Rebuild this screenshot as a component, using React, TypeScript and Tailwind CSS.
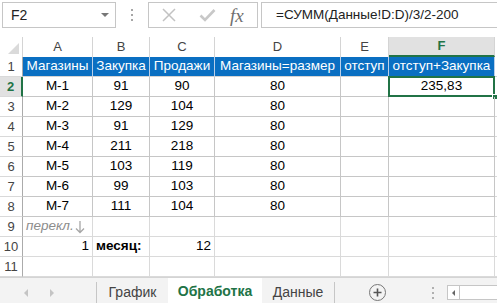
import React from "react";

const cols = ["w-[70px]", "w-[57px]", "w-[65px]", "w-[126px]", "w-[48px]", "w-[106px]"];

type Cell = { t?: React.ReactNode; align?: "l" | "c" | "r"; cls?: string };

const DownArrow = () => (
    <svg width="10" height="14" viewBox="0 0 10 14" className="ml-[1px]">
        <path d="M5 1 V12.5 M1 8.5 L5 12.5 L9 8.5" stroke="#a6a6a6" strokeWidth="1.3" fill="none" />
    </svg>
);

const dataRows: Cell[][] = [
    [{ t: "М-1" }, { t: "91" }, { t: "90" }, { t: "80" }, {}, { t: "235,83" }],
    [{ t: "М-2" }, { t: "129" }, { t: "104" }, { t: "80" }, {}, {}],
    [{ t: "М-3" }, { t: "91" }, { t: "129" }, { t: "80" }, {}, {}],
    [{ t: "М-4" }, { t: "211" }, { t: "218" }, { t: "80" }, {}, {}],
    [{ t: "М-5" }, { t: "103" }, { t: "119" }, { t: "80" }, {}, {}],
    [{ t: "М-6" }, { t: "99" }, { t: "103" }, { t: "80" }, {}, {}],
    [{ t: "М-7" }, { t: "111" }, { t: "104" }, { t: "80" }, {}, {}],
    [{ t: <>перекл.<DownArrow /></>, align: "l", cls: "italic text-[#8c8c8c]" }, {}, {}, {}, {}, {}],
    [{ t: "1", align: "r" }, { t: "месяц:", align: "l", cls: "font-bold" }, { t: "12", align: "r" }, {}, {}, {}],
    [{}, {}, {}, {}, {}, {}],
];

const headers = ["Магазины", "Закупка", "Продажи", "Магазины=размер", "отступ", "отступ+Закупка"];

const RowHead = ({ n, active }: { n: number; active?: boolean }) => (
    <div className={`w-[23px] h-full shrink-0 flex items-center justify-center border-b border-[#d9d9d9] text-[13px] ${active ? "bg-[#e1e1e1] text-[#217346] font-bold border-r-2 border-r-[#217346]" : "bg-white text-[#444] border-r border-r-[#ababab]"}`}>
        {n}
    </div>
);

const App = () => {
    return (
        <div className="w-[497px] h-[303px] bg-white overflow-hidden flex flex-col text-[#000]" style={{ fontFamily: '"Liberation Sans", Arial, sans-serif' }}>
            {/* formula bar */}
            <div className="h-[37px] shrink-0 flex items-start pt-[2px] pl-[2px]">
                <div className="w-[114px] h-[26px] border border-[#c6c6c6] flex items-center justify-between pl-[8px] pr-[6px] text-[14px] text-[#222]">
                    <span>F2</span>
                    <span className="w-0 h-0 border-l-[4px] border-r-[4px] border-t-[4px] border-l-transparent border-r-transparent border-t-[#777]"></span>
                </div>
                <div className="w-[32px] h-[26px] flex flex-col items-center justify-center gap-[3px]">
                    <span className="w-[2px] h-[2px] bg-[#a6a6a6]"></span>
                    <span className="w-[2px] h-[2px] bg-[#a6a6a6]"></span>
                    <span className="w-[2px] h-[2px] bg-[#a6a6a6]"></span>
                </div>
                <div className="w-[110px] h-[26px] border border-[#c6c6c6] flex items-center pl-[12px]">
                    <svg width="16" height="16" viewBox="0 0 16 16" className="mr-[22px]">
                        <path d="M2 2 L14 14 M14 2 L2 14" stroke="#c2c2c2" strokeWidth="1.5" fill="none" />
                    </svg>
                    <svg width="17" height="14" viewBox="0 0 17 14" className="mr-[14px]">
                        <path d="M1.5 7.5 L6 12 L15.5 2" stroke="#c8c8c8" strokeWidth="2.6" fill="none" />
                    </svg>
                    <span className="italic text-[19px] text-[#6f6f6f] leading-none" style={{ fontFamily: '"Liberation Serif", "Times New Roman", serif' }}>fx</span>
                </div>
                <div className="ml-[3px] flex-1 h-[26px] border border-r-0 border-[#c6c6c6] flex items-center pl-[14px] text-[13.5px] text-[#222]">
                    =СУММ(Данные!D:D)/3/2-200
                </div>
            </div>

            {/* column headers */}
            <div className="h-[20px] shrink-0 flex text-[13px] text-[#444]">
                <div className="w-[23px] shrink-0 border-r border-[#d4d4d4] relative">
                    <span className="absolute right-[3px] bottom-[3px] w-0 h-0 border-b-[11px] border-l-[11px] border-b-[#dadada] border-l-transparent"></span>
                </div>
                {["A", "B", "C", "D", "E"].map((c, i) => (
                    <div key={c} className={`${cols[i]} shrink-0 flex items-center justify-center border-r border-[#d4d4d4]`}>{c}</div>
                ))}
                <div className={`${cols[5]} shrink-0 flex items-center justify-center bg-[#e1e1e1] text-[#217346] font-bold border-b-2 border-[#217346] border-r border-r-[#d4d4d4]`}>F</div>
                <div className="flex-1"></div>
            </div>

            {/* row 1 */}
            <div className="h-[20px] shrink-0 flex">
                <RowHead n={1} />
                {headers.map((h, i) => (
                    <div key={h} className={`${cols[i]} shrink-0 bg-[#0a6fc2] text-white text-[13.5px] flex items-center justify-center whitespace-nowrap overflow-hidden border-r border-[#b9cfe9] border-b border-b-[#d4d4d4]`}>{h}</div>
                ))}
                <div className="flex-1 border-b border-[#d4d4d4]"></div>
            </div>

            {/* data rows */}
            {dataRows.map((row, r) => (
                <div key={r} className="h-[20px] shrink-0 flex">
                    <RowHead n={r + 2} active={r === 0} />
                    {row.map((c, i) => (
                        <div
                            key={i}
                            className={`${cols[i]} shrink-0 relative flex items-center text-[13.5px] px-[3px] whitespace-nowrap border-r border-b ${r < 7 ? "border-[#c6c6c6]" : "border-[#dadada]"} ${c.align === "l" ? "justify-start" : c.align === "r" ? "justify-end" : "justify-center"} ${c.cls ?? ""}`}
                        >
                            {c.t}
                            {r === 0 && i === 5 && (
                                <>
                                    <span className="absolute -left-px -top-px -right-px -bottom-px border-2 border-[#217346] pointer-events-none"></span>
                                    <span className="absolute -right-[4px] -bottom-[4px] w-[6px] h-[6px] bg-[#217346] border border-white"></span>
                                </>
                            )}
                        </div>
                    ))}
                    <div className="flex-1 border-b border-[#dadada]"></div>
                </div>
            ))}

            {/* sheet tabs */}
            <div className="flex-1 bg-[#f3f3f3] border-t border-[#d4d4d4] flex items-stretch text-[14px] text-[#444]">
                <div className="w-[97px] shrink-0 flex items-center pl-[24px] gap-[22px] border-r border-[#c6c6c6] my-[4px]">
                    <span className="w-0 h-0 border-t-[4px] border-b-[4px] border-r-[4px] border-t-transparent border-b-transparent border-r-[#c4c4c4]"></span>
                    <span className="w-0 h-0 border-t-[4px] border-b-[4px] border-l-[4px] border-t-transparent border-b-transparent border-l-[#c4c4c4]"></span>
                </div>
                <div className="w-[71px] shrink-0 flex items-center justify-center">График</div>
                <div className="w-[94px] shrink-0 flex items-center justify-center bg-white text-[#217346] font-bold border-b-2 border-[#217346]">Обработка</div>
                <div className="w-[73px] shrink-0 flex items-center justify-center border-r border-[#c6c6c6] my-[4px]">Данные</div>
                <div className="w-[84px] shrink-0 flex items-center justify-center">
                    <span className="w-[17px] h-[17px] rounded-full border border-[#777] flex items-center justify-center text-[#555]">
                        <svg width="9" height="9" viewBox="0 0 9 9"><path d="M4.5 0.5 V8.5 M0.5 4.5 H8.5" stroke="#555" strokeWidth="1.6" /></svg>
                    </span>
                </div>
                <div className="w-[28px] shrink-0 flex flex-col items-center justify-center gap-[3px]">
                    <span className="w-[2px] h-[2px] bg-[#b0b0b0]"></span>
                    <span className="w-[2px] h-[2px] bg-[#b0b0b0]"></span>
                    <span className="w-[2px] h-[2px] bg-[#b0b0b0]"></span>
                </div>
                <div className="flex-1 flex items-center">
                    <div className="w-full h-[15px] border border-r-0 border-[#c6c6c6] bg-white flex items-center">
                        <div className="w-[12px] h-full border-r border-[#c6c6c6] flex items-center justify-center">
                            <span className="w-0 h-0 border-t-[3px] border-b-[3px] border-r-[3px] border-t-transparent border-b-transparent border-r-[#666]"></span>
                        </div>
                    </div>
                </div>
            </div>
        </div>
    );
};

export default App;
